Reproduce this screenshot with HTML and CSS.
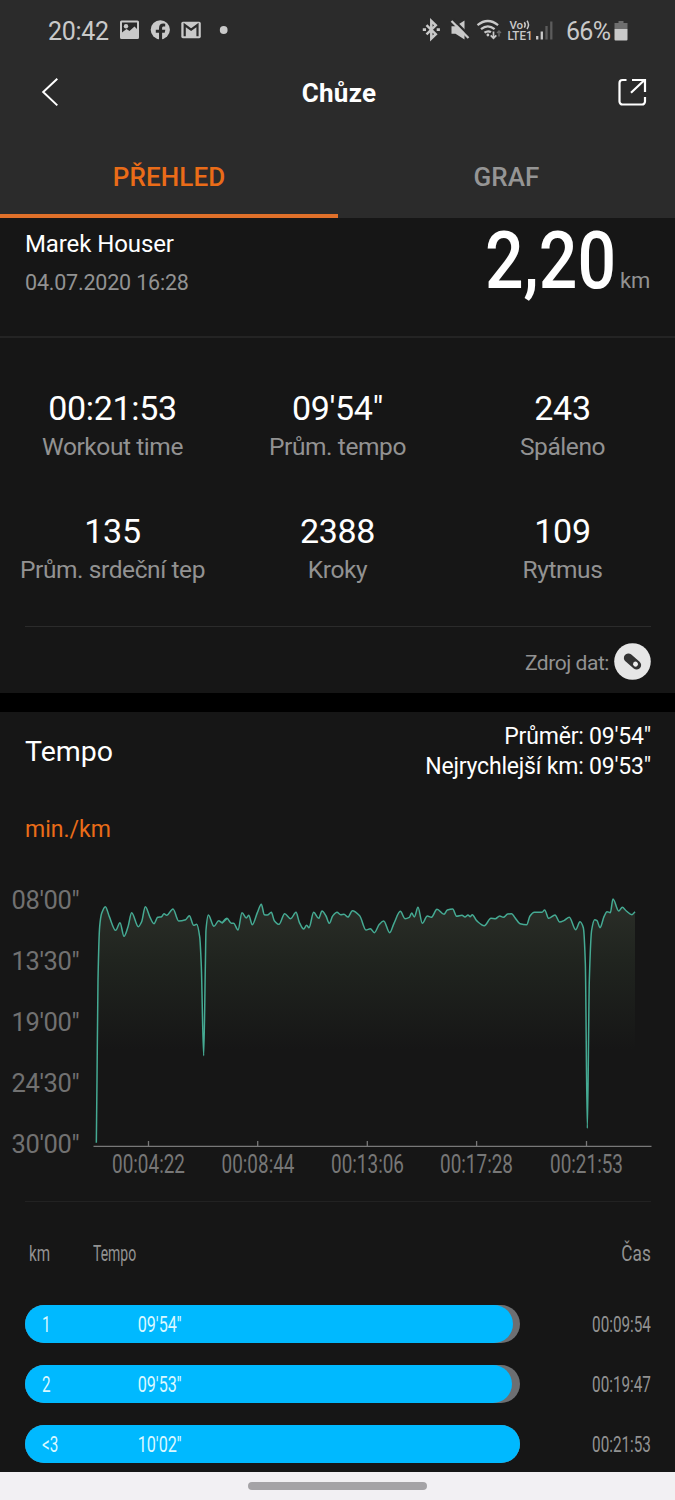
FILE: index.html
```html
<!DOCTYPE html>
<html lang="cs">
<head>
<meta charset="utf-8">
<title>Chůze</title>
<link rel="stylesheet" href="styles.css">
</head>
<body>
<header class="header">
  <div class="status">
    <span class="clock">20:42</span>
    <svg class="status-left" width="112" height="24" viewBox="118 18 112 24" fill="#c9c9c9">
      <path fill-rule="evenodd" d="M121.500 20.500h16a1.500 1.500 0 0 1 1.500 1.500v15.500a1.500 1.500 0 0 1-1.500 1.500h-16a1.500 1.500 0 0 1-1.500-1.500v-15.500a1.500 1.500 0 0 1 1.500-1.500zM122 22.500v10l4.500-3.500 3 2 5-4.500 2.500 2.500v-6.500z"/>
      <circle cx="126" cy="26.300" r="2.200"/>
      <circle cx="160.300" cy="29.800" r="9.600"/>
      <path d="M159 40v-7.200h-3.200v-3h3.200v-1.600c0-3.200 1.700-4.600 4.200-4.600l2 .2v2.700h-1.400c-1.300 0-1.700.7-1.700 1.700v1.600h3.200l-.6 3h-2.600v7.200z" fill="#2b2b2b"/>
      <rect x="181.300" y="21.800" width="19.500" height="16.400" rx="1.600"/>
      <path d="M184.700 36.300v-11.300l6.400 4.600 6.400-4.600v11.300" fill="none" stroke="#2b2b2b" stroke-width="2.200"/>
      <circle cx="223.700" cy="30" r="3.900"/>
    </svg>
    <svg class="status-right" width="135" height="24" viewBox="420 18 135 24" fill="none" stroke="#c9c9c9">
      <path d="M426.500 25.200l9.300 9-4.500 4.300v-17.500l4.500 4.300-9.300 9" stroke-width="2.500"/>
      <path d="M422.800 29.700h3.200M436.700 29.700h3.200" stroke-width="2.800"/>
      <path d="M451.500 26.200h4l9-5.700v19l-9-5.800h-4z" fill="#c9c9c9" stroke="none"/>
      <path d="M453 19.300l17 17" stroke="#2b2b2b" stroke-width="2.500"/>
      <path d="M451.500 21l17 17" stroke-width="2.300"/>
      <path d="M477.500 25.200q10.300-8.400 20.600 0M481 29.200q6.800-5.800 13.600 0M484.500 32.700q3.400-2.600 6.500-.5" stroke-width="2.200"/>
      <circle cx="487.900" cy="35" r="1.400" fill="#c9c9c9" stroke="none"/>
      <path d="M493.500 31.500v6.500M490.700 35.300l2.800 3 2.800-3" stroke-width="1.700"/>
      <path d="M499 36.500v-5M497 33l2-2 2 2" stroke="#6b6b6b" stroke-width="1.400"/>
      <g class="status-font" fill="#c9c9c9" stroke="none">
        <text x="509.500" y="28.500" font-size="11.500" textLength="13.500">Vo</text>
        <text x="507.500" y="39.500" font-size="12" textLength="25" lengthAdjust="spacingAndGlyphs">LTE1</text>
      </g>
      <path d="M524.300 22.200q1.800 2.600 0 5.500M527 20.800q3 4 0 8.200" stroke-width="1.500"/>
      <path d="M537.200 36v3.500M541.800 31.500v8" stroke-width="2.300"/>
      <path d="M546.500 26v13.500M551.300 21.500v18" stroke="#5c5c5c" stroke-width="2.300"/>
    </svg>
    <span class="percent">66%</span>
    <svg class="battery" width="15" height="22" viewBox="0 0 15 22">
      <path d="M4.500 1h5v2h4v6h-13v-6h4z" fill="#6e6e6e"/>
      <path d="M.5 9h13v10.500q0 1-1 1h-11q-1 0-1-1z" fill="#c9c9c9"/>
    </svg>
  </div>
  <div class="toolbar">
    <svg width="30" height="34" viewBox="35 76 30 34" fill="none" stroke="#fff" stroke-width="2"><path d="M57.300 78.800l-14.100 13.200 14.100 13.400"/></svg>
    <h1 class="title">Chůze</h1>
    <svg width="30" height="30" viewBox="618 78 30 30" fill="none" stroke="#fff" stroke-width="2.200"><path d="M626.500 80h-4a3 3 0 0 0-3 3v18.500a3 3 0 0 0 3 3h19.500a3 3 0 0 0 3-3v-4.500M631 92.700l13.500-12.700M632 80h13v12"/></svg>
  </div>
  <nav class="tabs">
    <a class="tab active"><span>PŘEHLED</span></a>
    <a class="tab"><span>GRAF</span></a>
  </nav>
</header>
<section class="intro">
  <div class="person">
    <div class="name">Marek Houser</div>
    <div class="date">04.07.2020 16:28</div>
  </div>
  <div class="distance"><span class="distance-value">2,20</span><span class="unit">km</span></div>
</section>
<section class="stats">
  <div class="stat"><div class="value">00:21:53</div><div class="label">Workout time</div></div>
  <div class="stat"><div class="value">09'54"</div><div class="label">Prům. tempo</div></div>
  <div class="stat"><div class="value">243</div><div class="label">Spáleno</div></div>
  <div class="stat"><div class="value">135</div><div class="label">Prům. srdeční tep</div></div>
  <div class="stat"><div class="value">2388</div><div class="label">Kroky</div></div>
  <div class="stat"><div class="value">109</div><div class="label">Rytmus</div></div>
</section>
<div class="source">
  <span>Zdroj dat:</span>
  <svg width="37" height="37" viewBox="-18.500 -18.500 37 37"><circle r="18.300" fill="#e6e6e6"/><g transform="rotate(41)"><rect x="-10" y="-4.500" width="20" height="9" rx="4.500" fill="#333"/><circle cx="4" r="2.500" fill="#eee"/></g></svg>
</div>
<section class="pace">
  <div class="pace-head">
    <h2>Tempo</h2>
    <div class="summary"><div>Průměr: 09'54"</div><div>Nejrychlejší km: 09'53"</div></div>
  </div>
  <div class="pace-unit">min./km</div>
  <svg class="chart" width="675" height="340" viewBox="0 860 675 340">
    <defs><linearGradient id="fade" gradientUnits="userSpaceOnUse" x1="0" y1="900" x2="0" y2="1050">
      <stop offset="0" stop-color="#2b2e28"/><stop offset=".4" stop-color="#20241f"/><stop offset="1" stop-color="#161616"/>
    </linearGradient></defs>
    <path id="area" fill="url(#fade)"/>
    <path id="line" class="pace-line"/>
    <path class="axis" d="M93.500 1146.300H651.500M148.500 1146V1141M257.700 1146V1141M367.300 1146V1141M476.600 1146V1141M586.500 1146V1141"/>
    <g class="y-labels">
      <text x="11.500" y="909">08'00"</text><text x="11.500" y="969.500">13'30"</text><text x="11.500" y="1030.700">19'00"</text><text x="11.500" y="1091.500">24'30"</text><text x="11.500" y="1152.700">30'00"</text>
    </g>
    <g class="x-labels">
      <text x="112" y="1172.700" textLength="73" lengthAdjust="spacingAndGlyphs">00:04:22</text>
      <text x="221.500" y="1172.700" textLength="73" lengthAdjust="spacingAndGlyphs">00:08:44</text>
      <text x="331" y="1172.700" textLength="73" lengthAdjust="spacingAndGlyphs">00:13:06</text>
      <text x="440" y="1172.700" textLength="73" lengthAdjust="spacingAndGlyphs">00:17:28</text>
      <text x="550" y="1172.700" textLength="73" lengthAdjust="spacingAndGlyphs">00:21:53</text>
    </g>
  </svg>
</section>
<section class="splits">
  <div class="split-head"><span class="narrow col-km">km</span><span class="narrow col-pace">Tempo</span><span class="narrow right cas">Čas</span></div>
  <div class="split"><div class="track"><div class="fill" style="width:488px"><span class="narrow">1</span><span class="narrow pace-value">09'54''</span></div></div><span class="narrow right">00:09:54</span></div>
  <div class="split"><div class="track"><div class="fill" style="width:486.500px"><span class="narrow">2</span><span class="narrow pace-value">09'53''</span></div></div><span class="narrow right">00:19:47</span></div>
  <div class="split"><div class="track"><div class="fill" style="width:495px"><span class="narrow">&lt;3</span><span class="narrow pace-value">10'02''</span></div></div><span class="narrow right">00:21:53</span></div>
</section>
<footer class="navbar"><div class="handle"></div></footer>
<script src="chart.js"></script>
</body>
</html>
```
FILE: styles.css
```css
* { box-sizing: border-box; }
body { margin: 0; width: 675px; height: 1500px; overflow: hidden; background: #161616; color: #fff; font-family: Roboto, "Liberation Sans", sans-serif; display: flex; flex-direction: column; }
body > * { flex: none; }
svg { display: block; flex: none; }
h1, h2 { margin: 0; }

.header { height: 218px; background: #2b2b2b; }
.status { height: 62px; padding: 1px 0 0 48px; display: flex; align-items: center; color: #c9c9c9; font-size: 25px; line-height: 30px; }
.clock { width: 70px; letter-spacing: -.3px; }
.status-right { margin-left: 190px; }
.percent { width: 48px; margin-left: 11px; letter-spacing: -.7px; }
.status-left, .status-right { margin-top: -3px; }
.battery { margin-top: -2px; }
.status-font { font-weight: 500; }

.toolbar { height: 62px; padding: 0 27px 0 35px; display: flex; align-items: center; justify-content: space-between; }
.toolbar svg:first-child { margin-right: -5px; }
.title { font-size: 26px; line-height: 30px; font-weight: 700; letter-spacing: .25px; }
.tabs { height: 94px; display: grid; grid-template-columns: 338px 337px; text-align: center; color: #959595; font-size: 26px; line-height: 30px; font-weight: 500; letter-spacing: .1px; }
.tab { padding-top: 38px; }
.tab.active { color: #ea6c18; border-bottom: 4px solid #e0702a; }

.intro { height: 120px; padding: 10px 25px 0; display: flex; justify-content: space-between; border-bottom: 2px solid #242424; }
.name { font-size: 24px; line-height: 32px; letter-spacing: -.1px; }
.date { margin-top: 9px; font-size: 21.500px; line-height: 28px; letter-spacing: -.2px; color: #929292; }
.distance { display: flex; align-items: baseline; height: 80px; margin-top: -14px; line-height: 94px; }
.distance-value { font-size: 79px; font-weight: 500; width: 131px; transform: scaleX(.86); transform-origin: left; white-space: nowrap; margin-right: 4px; }
.unit { font-size: 22px; letter-spacing: -.2px; color: #929292; }

.stats { height: 288px; padding-top: 48px; display: grid; grid-template-columns: repeat(3, 225px); grid-auto-rows: 123px; text-align: center; }
.value { font-size: 34px; line-height: 44px; letter-spacing: -.35px; }
.label { font-size: 24.500px; line-height: 32px; margin-top: 1px; letter-spacing: -.42px; color: #929292; }

.source { height: 67px; margin: 0 24px 0 25px; border-top: 1px solid #2b2b2b; display: flex; justify-content: flex-end; align-items: center; gap: 5px; font-size: 21px; letter-spacing: -.45px; color: #929292; padding-top: 3px; }
.source span { padding-top: 2px; }
.pace { height: 508px; border-top: 19px solid #000; }
.pace-head { height: 86px; padding: 9px 24px 0 25px; display: flex; justify-content: space-between; }
.pace-head h2 { font-size: 28.500px; line-height: 32px; margin-top: 15px; font-weight: 400; }
.summary { font-size: 23px; line-height: 30.500px; letter-spacing: -.2px; text-align: right; padding-top: .5px; }
.pace-unit { height: 62px; padding: 15px 25px 0; font-size: 23px; line-height: 34px; color: #ea6c18; }
.pace-line { fill: none; stroke: #45aa93; stroke-width: 1.500; }
.axis { fill: none; stroke: #787878; stroke-width: 1.300; }
.y-labels { font-size: 25.500px; letter-spacing: -.35px; fill: #717171; }
.x-labels { font-size: 25px; fill: #777; }

.splits { height: 271px; margin: 0 24px 0 25px; border-top: 1px solid #222; color: #929292; }
.split-head { height: 103px; display: flex; align-items: center; padding-left: 4px; }
.narrow { display: inline-block; font-size: 21.500px; line-height: 28px; transform: scaleX(.71); transform-origin: left; white-space: nowrap; padding-top: 1px; }
.right { margin-left: auto; transform-origin: right; }
.col-km { width: 64px; }
.col-pace { transform: scaleX(.65); }
.cas { transform: scaleX(.8); }
.split { height: 38px; margin-bottom: 22px; display: flex; align-items: center; }
.track { width: 495px; height: 38px; border-radius: 19px; background: #6d6f72; }
.fill { height: 38px; border-radius: 19px; background: #00b9ff; color: #d9f8ff; display: grid; grid-template-columns: 95px 1fr; padding: 5px 17px; }
.fill .pace-value { transform: scaleX(.75); padding-left: 1px; }
.navbar { height: 28px; background: #f2f0f3; padding-top: 10px; }
.handle { width: 179px; height: 8px; border-radius: 4px; background: #a5a3a6; margin: 0 auto; }
```
FILE: chart.js
```js
// Pace samples in third-pixel units, grouped by the left edge of each stretch.
const stretches = [
  [0, [[289,788],[291,600],[294,300],[299,140],[305,100],[316,80],[328,110],[347,151],[360,128],[372,169],[384,140],[395,98],[415,140],[425,125],[436,80],[450,112],[462,131],[473,112],[485,110],[492,101],[500,106],[519,87],[536,123],[557,119],[568,107],[581,136],[590,133],[599,170],[604,260],[611,527],[616,260],[618,150],[625,105],[642,139],[656,122],[666,128],[681,115]]],
  [660, [[5,130],[21,115],[34,130],[41,130],[54,150],[66,98],[79,114],[86,106],[97,134],[112,98],[124,73],[133,104],[142,105],[154,97],[163,122],[177,133],[194,101],[212,116],[228,97],[238,127],[251,147],[260,136],[267,143],[281,97],[296,115],[306,93],[318,108],[328,130],[338,108],[351,97],[362,104],[372,103],[384,111],[397,92],[419,107],[438,150],[451,146],[463,158],[478,133],[491,123],[509,158],[522,130],[541,94],[555,116],[568,112],[575,99],[583,111],[594,82],[607,130],[622,108],[634,112],[651,88]]],
  [1320, [[12,103],[22,90],[38,87],[50,109],[66,106],[75,111],[84,105],[90,110],[97,104],[110,122],[133,137],[153,115],[166,116],[179,108],[190,112],[203,102],[215,101],[225,113],[240,131],[260,134],[270,108],[283,97],[306,97],[314,90],[326,115],[345,105],[359,126],[373,121],[388,112],[407,149],[420,125],[430,143],[436,250],[442,745],[448,300],[455,150],[464,119],[471,122],[480,143],[492,110],[501,95],[511,98],[519,57],[536,93],[547,82],[559,93],[576,104],[585,95]]]
];
const p = stretches.flatMap(([left, pts]) => pts.map(([x, y]) => [(x + left) / 3, 880 + y / 3]));
const slope = p.slice(1).map((b, i) => (b[1] - p[i][1]) / (b[0] - p[i][0]));
// Monotone tangents keep the peaks from overshooting.
const m = p.map((_, i) => {
  const a = slope[i - 1], b = slope[i];
  if (a === undefined) return b;
  if (b === undefined) return a;
  return a * b <= 0 ? 0 : 2 * a * b / (a + b);
});
let d = `M${p[0]}`;
for (let i = 1; i < p.length; i++) {
  const h = (p[i][0] - p[i - 1][0]) / 3;
  d += `C${p[i - 1][0] + h},${p[i - 1][1] + m[i - 1] * h} ${p[i][0] - h},${p[i][1] - m[i] * h} ${p[i]}`;
}
document.getElementById('line').setAttribute('d', d);
document.getElementById('area').setAttribute('d', `${d}V1145H${p[0][0]}Z`);
```
